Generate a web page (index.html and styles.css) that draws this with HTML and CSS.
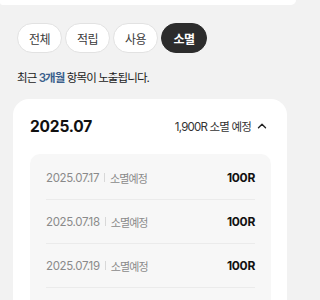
FILE: index.html
```html
<!DOCTYPE html>
<html lang="ko">
<head>
<meta charset="utf-8">
<link rel="stylesheet" href="styles.css">
</head>
<body>
<div class="top"></div>
<div class="chips">
  <div class="chip">전체</div>
  <div class="chip">적립</div>
  <div class="chip">사용</div>
  <div class="chip active">소멸</div>
</div>
<p class="notice">최근 <span class="hl">3개월</span> 항목이 노출됩니다.</p>
<section class="card">
  <div class="card-head">
    <div class="month">2025.07</div>
    <div class="summary">
      <span>1,900R 소멸 예정</span>
      <svg class="chev" width="10" height="10" viewBox="0 0 10 10"><path d="M1.5 6.8 L5 3.3 L8.5 6.8" fill="none" stroke="#222" stroke-width="1.4" stroke-linecap="round" stroke-linejoin="round"/></svg>
    </div>
  </div>
  <div class="list">
    <div class="row"><span class="date">2025.07.17</span><span class="sep"></span><span class="status">소멸예정</span><span class="amt">100R</span></div>
    <div class="row"><span class="date">2025.07.18</span><span class="sep"></span><span class="status">소멸예정</span><span class="amt">100R</span></div>
    <div class="row"><span class="date">2025.07.19</span><span class="sep"></span><span class="status">소멸예정</span><span class="amt">100R</span></div>
  </div>
</section>
</body>
</html>
```
FILE: styles.css
```css
html, body {
  margin: 0;
  padding: 0;
}
body {
  background: #f2f2f2;
  font-family: "Inter", "Noto Sans CJK KR", sans-serif;
  color: #222;
  width: 300px;
  height: 300px;
  overflow: hidden;
}
.top {
  width: 296px;
  height: 5px;
  background: #fff;
  border-radius: 0 0 14px 6px;
}
.chips {
  display: flex;
  gap: 3px;
  margin-top: 18px;
  padding-left: 17px;
}
.chip {
  box-sizing: border-box;
  width: 45px;
  height: 30px;
  border: 1px solid #e2e2e2;
  border-radius: 15px;
  background: #fff;
  display: flex;
  align-items: center;
  justify-content: center;
  font-size: 12px;
  color: #3a3a3a;
  letter-spacing: -0.6px;
}
.chip.active {
  width: 46px;
  background: #2c2c2c;
  border-color: #2c2c2c;
  color: #fff;
  font-weight: 700;
}
.notice {
  margin: 16px 0 0 17px;
  font-size: 11.5px;
  line-height: 18px;
  letter-spacing: -0.9px;
  color: #222;
}
.hl {
  color: #3b5f8c;
  font-weight: 600;
}
.card {
  margin: 12px 13px 0;
  background: #fff;
  border-radius: 16px;
  padding: 15px 16px 0 17px;
}
.card-head {
  display: flex;
  align-items: center;
  justify-content: space-between;
  height: 24px;
}
.month {
  font-size: 15.5px;
  font-weight: 700;
  color: #111;
  letter-spacing: -0.2px;
}
.summary {
  display: flex;
  align-items: center;
  gap: 6px;
  font-size: 11.5px;
  letter-spacing: -0.8px;
  color: #333;
  padding-right: 4px;
}
.chev {
  display: block;
}
.list {
  margin-top: 16px;
  background: #f7f7f7;
  border-radius: 10px;
  padding: 2px 16px 30px;
}
.row {
  display: flex;
  align-items: center;
  height: 44px;
  border-bottom: 1px solid #ebebeb;
  box-sizing: border-box;
}
.date {
  font-size: 11.5px;
  color: #8a8a8a;
  letter-spacing: -0.35px;
}
.sep {
  width: 1px;
  height: 9px;
  background: #d8d8d8;
  margin: 0 5px;
}
.status {
  font-size: 11px;
  color: #8a8a8a;
  letter-spacing: -0.9px;
}
.amt {
  margin-left: auto;
  font-size: 12px;
  font-weight: 700;
  color: #111;
  letter-spacing: -0.3px;
}
```
